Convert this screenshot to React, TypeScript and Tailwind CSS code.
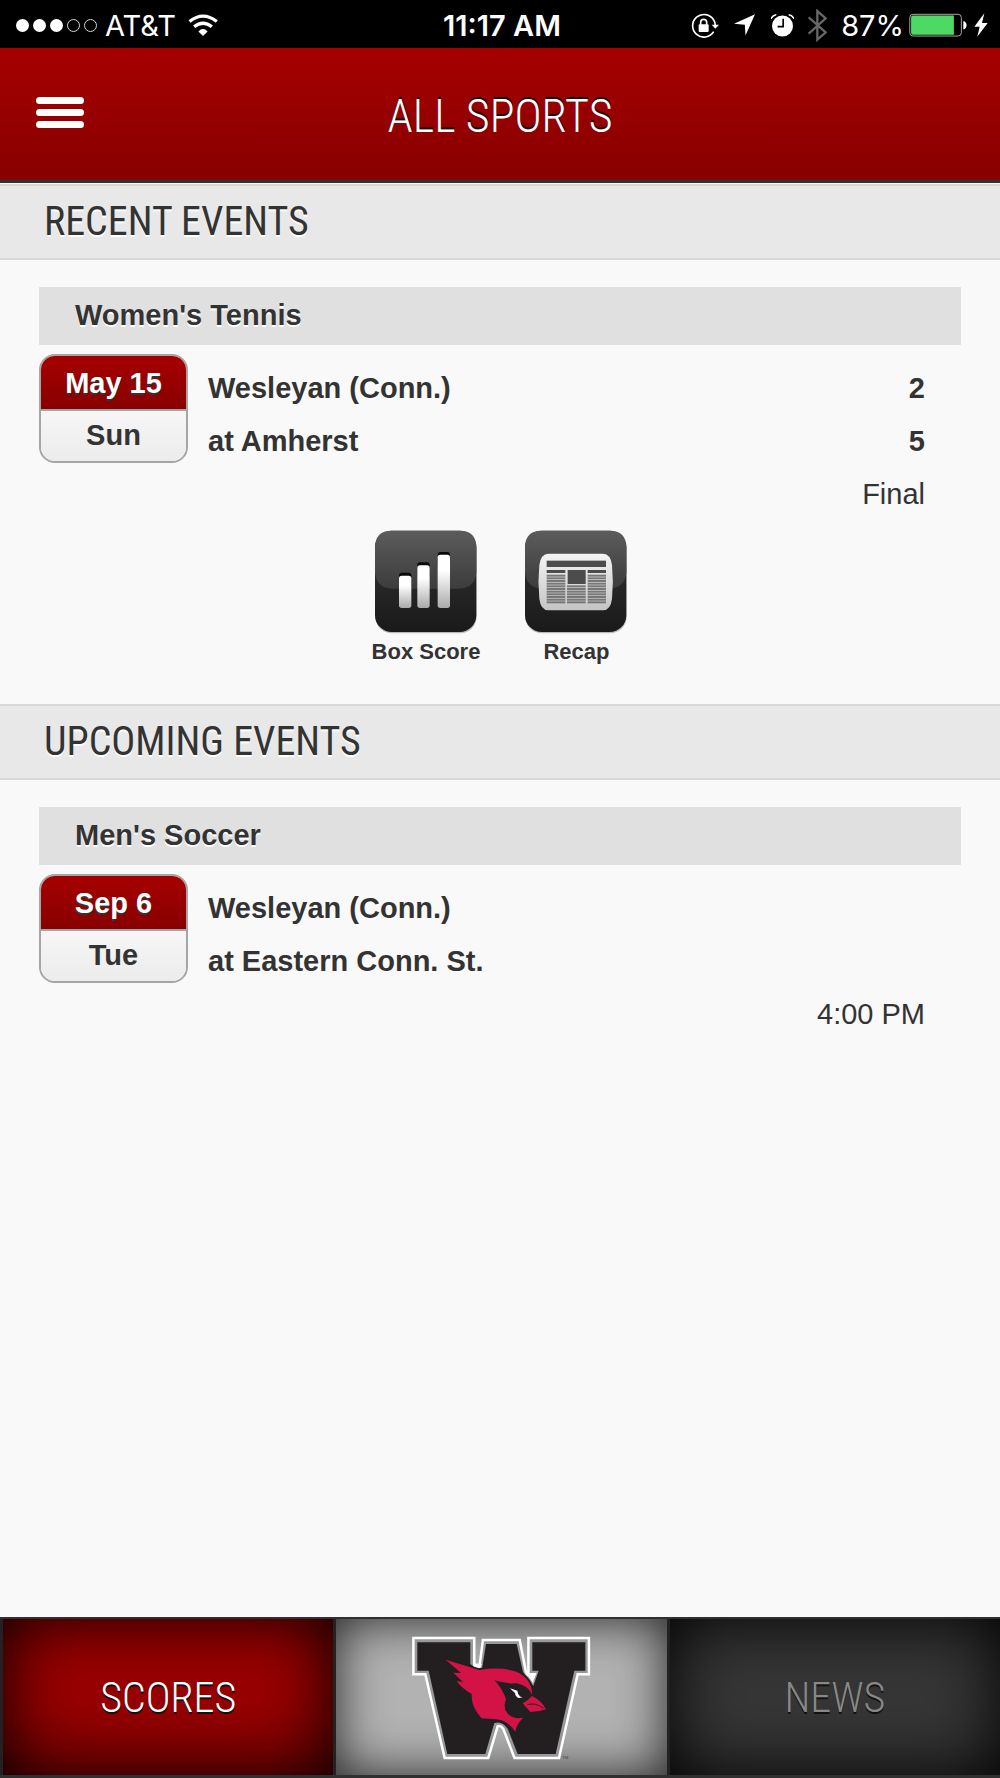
import React from "react";

type Game = {
  sport: string;
  date: string;
  day: string;
  away: string;
  home: string;
  awayScore?: string;
  homeScore?: string;
  status: string;
};

const recent: Game = {
  sport: "Women's Tennis",
  date: "May 15",
  day: "Sun",
  away: "Wesleyan (Conn.)",
  home: "at Amherst",
  awayScore: "2",
  homeScore: "5",
  status: "Final",
};

const upcoming: Game = {
  sport: "Men's Soccer",
  date: "Sep 6",
  day: "Tue",
  away: "Wesleyan (Conn.)",
  home: "at Eastern Conn. St.",
  status: "4:00 PM",
};

function StatusBar() {
  return (
    <div className="flex h-12 shrink-0 items-center bg-black pt-0.5 pr-3 pl-4 font-['Inter',sans-serif] text-[29px] leading-none text-white">
      <div className="flex flex-1 items-center">
        <div className="mr-2 flex gap-1">
          {[0, 1, 2, 3, 4].map((n) => (
            <span
              key={n}
              className={n < 3 ? "size-[13px] rounded-full bg-white" : "size-[13px] rounded-full border border-neutral-300"}
            />
          ))}
        </div>
        <span>AT&amp;T</span>
        <svg className="ml-3 h-[22px] w-[30px]" viewBox="565 37 90 67" fill="none" stroke="white" strokeWidth="10">
          <path d="M569 60Q610 27 652 60" />
          <path d="M583 76Q610 54 637 76" />
          <path d="M596 90Q610 76 624 90L610 104Z" fill="white" stroke="none" />
        </svg>
      </div>
      <span className="font-semibold">11:17 AM</span>
      <div className="flex flex-1 items-center justify-end">
        {/* rotation lock */}
        <svg className="mr-[15px] h-[25px] w-[28px]" viewBox="65 35 84 75">
          <path d="M133 56A34 34 0 1 0 133 91" fill="none" stroke="white" strokeWidth="5" />
          <path d="M133 56Q137 62 138 72" fill="none" stroke="white" strokeWidth="5" />
          <path d="M127 70H149L138 82Z" fill="white" />
          <rect x="88" y="69" width="30" height="23" rx="3" fill="white" />
          <path d="M94 70V63A9 9 0 0 1 112 63V70" fill="none" stroke="white" strokeWidth="5" />
        </svg>
        {/* location */}
        <svg className="mr-4 h-[22px] w-[21px]" viewBox="194 43 64 66" fill="white">
          <path d="M258 43L229 108L227 75L194 72Z" />
        </svg>
        {/* alarm */}
        <svg className="mr-[14px] h-[23px] w-[23px]" viewBox="305 40 70 69">
          <circle cx="340" cy="76" r="32" fill="white" />
          <path d="M306 54Q307 42 321 42Q311 45 306 54ZM374 54Q373 42 359 42Q369 45 374 54Z" fill="white" stroke="white" strokeWidth="3" />
          <path d="M342 54V78H325" fill="none" stroke="black" strokeWidth="5" />
        </svg>
        {/* bluetooth */}
        <svg className="mr-[14px] h-[33px] w-[19px]" viewBox="417 25 57 99" fill="none" stroke="#666" strokeWidth="7">
          <path d="M419 50L470 95L445 117V31L470 53L419 99" />
        </svg>
        <span>87%</span>
        {/* battery */}
        <svg className="ml-1 h-6 w-[60px]" viewBox="713 37 180 74">
          <rect x="716" y="41" width="159" height="67" rx="10" fill="none" stroke="#aaa" strokeWidth="3" />
          <path d="M726 45H852V104H726Q720 104 720 98V51Q720 45 726 45Z" fill="#4cd964" />
          <path d="M881 62Q891 64 891 75Q891 86 881 88Z" fill="white" />
        </svg>
        <svg className="ml-[6px] h-6 w-[14px]" viewBox="914 37 42 72" fill="white">
          <path d="M945 38L915 78H931L924 108L955 67H938Z" />
        </svg>
      </div>
    </div>
  );
}

function Header() {
  return (
    <header className="grid h-[135px] shrink-0 grid-cols-[1fr_auto_1fr] items-center border-b-3 border-[#333] bg-linear-to-b from-[#a60000] to-[#880000] px-9 pb-1">
      <button aria-label="Menu" className="flex w-12 flex-col gap-[5px]">
        <span className="h-[7px] w-full rounded-full bg-white" />
        <span className="h-[7px] w-full rounded-full bg-white" />
        <span className="h-[7px] w-full rounded-full bg-white" />
      </button>
      <h1 className="pt-2 font-['Roboto_Condensed','Liberation_Sans_Narrow',sans-serif] text-[46px] font-light text-white [text-shadow:0_-2px_0_#111]">
        ALL SPORTS
      </h1>
    </header>
  );
}

function SectionTitle({ children }: { children: React.ReactNode }) {
  return (
    <h2 className="flex h-[76px] items-center border-y-2 border-[#d9d9d9] bg-[#e8e8e8] px-11 font-['Roboto_Condensed','Liberation_Sans_Narrow',sans-serif] text-[40px] text-[#333] [text-shadow:0_2px_0_#fff]">
      {children}
    </h2>
  );
}

function GameRow({ game }: { game: Game }) {
  return (
    <div>
      <h3 className="flex h-[58px] items-center bg-[#e0e0e0] px-9 font-bold [text-shadow:0_2px_0_#fff]">{game.sport}</h3>
      <div className="mt-[9px] flex gap-5">
        <div className="flex h-[109px] w-[149px] shrink-0 flex-col overflow-hidden rounded-2xl border-2 border-[#a5a5a5] text-center font-bold">
          <div className="flex flex-1 items-center justify-center border-b-2 border-[#a5a5a5] bg-linear-to-b from-[#a60000] to-[#880000] pt-0.5 text-white [text-shadow:0_2px_0_#333]">
            {game.date}
          </div>
          <div className="flex flex-1 items-center justify-center bg-linear-to-b from-[#f6f6f6] to-[#ececec]">{game.day}</div>
        </div>
        <div className="flex-1 pt-2 pr-9 leading-[53px]">
          <div className="flex justify-between font-bold">
            <span>{game.away}</span>
            <span>{game.awayScore}</span>
          </div>
          <div className="flex justify-between font-bold">
            <span>{game.home}</span>
            <span>{game.homeScore}</span>
          </div>
          <div className="text-right">{game.status}</div>
        </div>
      </div>
    </div>
  );
}

function BoxScoreIcon() {
  return (
    <svg className="size-[104px]" viewBox="68 60 312 312">
      <defs>
        <linearGradient id="tile" x1="0" y1="0" x2="0" y2="1">
          <stop offset="0" stopColor="#343434" />
          <stop offset="1" stopColor="#1a1a1a" />
        </linearGradient>
        <linearGradient id="gloss" x1="0" y1="0" x2="0" y2="1">
          <stop offset="0" stopColor="#5c5c5c" />
          <stop offset="1" stopColor="#3c3c3c" />
        </linearGradient>
        <linearGradient id="bar" x1="0" y1="0" x2="0" y2="1">
          <stop offset="0.3" stopColor="#fff" />
          <stop offset="1" stopColor="#aaa" />
        </linearGradient>
      </defs>
      <rect x="72" y="65" width="304" height="305" rx="50" fill="#bbb" />
      <rect x="71" y="62" width="304" height="304" rx="50" fill="url(#tile)" />
      <path d="M71 187V112Q71 62 121 62H325Q375 62 375 112V187Q371 236 322 236H124Q75 236 71 187Z" fill="url(#gloss)" />
      <g fill="#080808">
        <rect x="143" y="188" width="37" height="50" rx="9" />
        <rect x="198" y="157" width="37" height="50" rx="9" />
        <rect x="259" y="126" width="37" height="50" rx="9" />
      </g>
      <g fill="url(#bar)">
        <rect x="143" y="197" width="37" height="97" rx="8" />
        <rect x="198" y="166" width="37" height="128" rx="8" />
        <rect x="259" y="134" width="37" height="160" rx="8" />
      </g>
    </svg>
  );
}

function RecapIcon() {
  const lines = [194, 202, 210, 218, 226, 234, 242, 250, 258, 266, 274];
  return (
    <svg className="size-[104px]" viewBox="520 60 312 312">
      <defs>
        <linearGradient id="paper" x1="0" y1="0" x2="0" y2="1">
          <stop offset="0" stopColor="#f4f4f4" />
          <stop offset="1" stopColor="#c4c4c4" />
        </linearGradient>
      </defs>
      <rect x="524" y="65" width="304" height="305" rx="50" fill="#bbb" />
      <rect x="523" y="62" width="304" height="304" rx="50" fill="url(#tile)" />
      <path d="M523 187V112Q523 62 573 62H777Q827 62 827 112V187Q823 236 774 236H576Q527 236 523 187Z" fill="url(#gloss)" />
      <path d="M593 131H757Q780 132 784 165Q789 215 784 266Q780 300 757 301H593Q570 300 566 266Q561 215 566 165Q570 132 593 131Z" fill="url(#paper)" />
      <g fill="#4c4c4c">
        <rect x="588" y="152" width="178" height="19" />
        <rect x="588" y="180" width="56" height="9" />
        <rect x="711" y="180" width="55" height="9" />
        <rect x="651" y="180" width="54" height="42" />
      </g>
      <g fill="#777">
        {lines.map((y) => (
          <g key={y}>
            <rect x="588" y={y} width="56" height="6" />
            {y > 222 && <rect x="649" y={y} width="56" height="6" />}
            <rect x="711" y={y} width="55" height="6" />
          </g>
        ))}
      </g>
    </svg>
  );
}

function WesleyanLogo() {
  const w =
    "M44 86H219V172L242 170L252 92H356L374 185L402 205L410 187H389V86H563V187H530L474 438H346L313 352Q303 338 290 344L262 438H137L79 187H44Z";
  return (
    <svg role="img" aria-label="Wesleyan Cardinals" className="h-[128px] w-[183px]" viewBox="30 70 549 384">
      <path d={w} fill="#fff" stroke="#fff" strokeWidth="15" />
      <path d={w} fill="#96989b" />
      <path d="M52 95H211V160L232 176L246 174L258 100H350L369 184L400 226L416 180H397V95H556V180H523L467 430H353L323 354Q306 330 283 337L256 430H142L86 180H52Z" fill="#231f20" />
      <path d="M219 158L246 160L240 172L222 168ZM376 184L392 198L405 190L399 218Q392 202 376 190Z" fill="#fff" />
      {/* cardinal, outlined so it lifts off the letter */}
      <path
        d="M137 147L238 178Q300 168 345 182Q397 202 397 254L438 296L391 305L368 322L346 363Q320 331 290 325L245 323Q213 290 215 250L170 211L185 214L160 186L180 187Z"
        fill="#231f20"
        stroke="#231f20"
        strokeWidth="10"
      />
      <path
        d="M137 147L238 178Q300 168 345 182Q396 202 396 252Q384 224 350 218Q315 220 282 208Q306 230 318 266Q308 292 322 308Q340 327 369 321Q349 341 346 363Q320 325 280 325L245 323Q213 290 215 250Q185 233 170 211L189 214L160 186L183 187Z"
        fill="#d31245"
      />
      <path d="M396 256Q425 270 438 296Q415 304 391 304L368 278Q384 270 396 256Z" fill="#d31245" />
      <path d="M382 282Q408 275 430 293" fill="none" stroke="#231f20" strokeWidth="3" />
      <path d="M330 233L352 240Q354 258 368 260L356 262Q346 258 345 247Z" fill="#fff" />
      <text x="486" y="444" fontSize="13" fill="#444" fontFamily="Liberation Sans">TM</text>
    </svg>
  );
}

function TabBar() {
  return (
    <nav className="grid h-[161px] shrink-0 grid-cols-3 gap-[3px] border-t-2 border-b-3 border-[#303030] bg-[#222] pl-[3px] font-['Roboto_Condensed','Liberation_Sans_Narrow',sans-serif] text-[42px] font-light">
      <button className="flex h-full items-center justify-center bg-linear-to-b from-[#a60000] to-[#8c0000] text-white shadow-[inset_0_0_70px_#000] [text-shadow:0_2px_0_#111]">
        SCORES
      </button>
      <button className="flex h-full items-center justify-center bg-[#b2b2b2] pt-0.5 shadow-[inset_0_0_50px_#222]">
        <WesleyanLogo />
      </button>
      <button className="flex h-full items-center justify-center bg-[#363636] text-[#888] shadow-[inset_0_0_70px_#000] [text-shadow:0_2px_0_#111]">
        NEWS
      </button>
    </nav>
  );
}

export default function App() {
  return (
    <div className="flex min-h-screen flex-col bg-[#f9f9f9] font-['Liberation_Sans',Arial,sans-serif] text-[29px] text-[#333]">
      <StatusBar />
      <Header />
      <main className="flex-1 pt-px">
        <section>
          <SectionTitle>RECENT EVENTS</SectionTitle>
          <div className="px-[39px] pt-[27px] pb-[34px]">
            <GameRow game={recent} />
            <div className="mt-[9px] flex justify-center gap-11 text-[22px] leading-9 font-bold">
              <a href="#box-score" className="flex flex-col items-center">
                <BoxScoreIcon />
                Box Score
              </a>
              <a href="#recap" className="flex flex-col items-center">
                <RecapIcon />
                Recap
              </a>
            </div>
          </div>
        </section>
        <section>
          <SectionTitle>UPCOMING EVENTS</SectionTitle>
          <div className="px-[39px] py-[27px]">
            <GameRow game={upcoming} />
          </div>
        </section>
      </main>
      <TabBar />
    </div>
  );
}
